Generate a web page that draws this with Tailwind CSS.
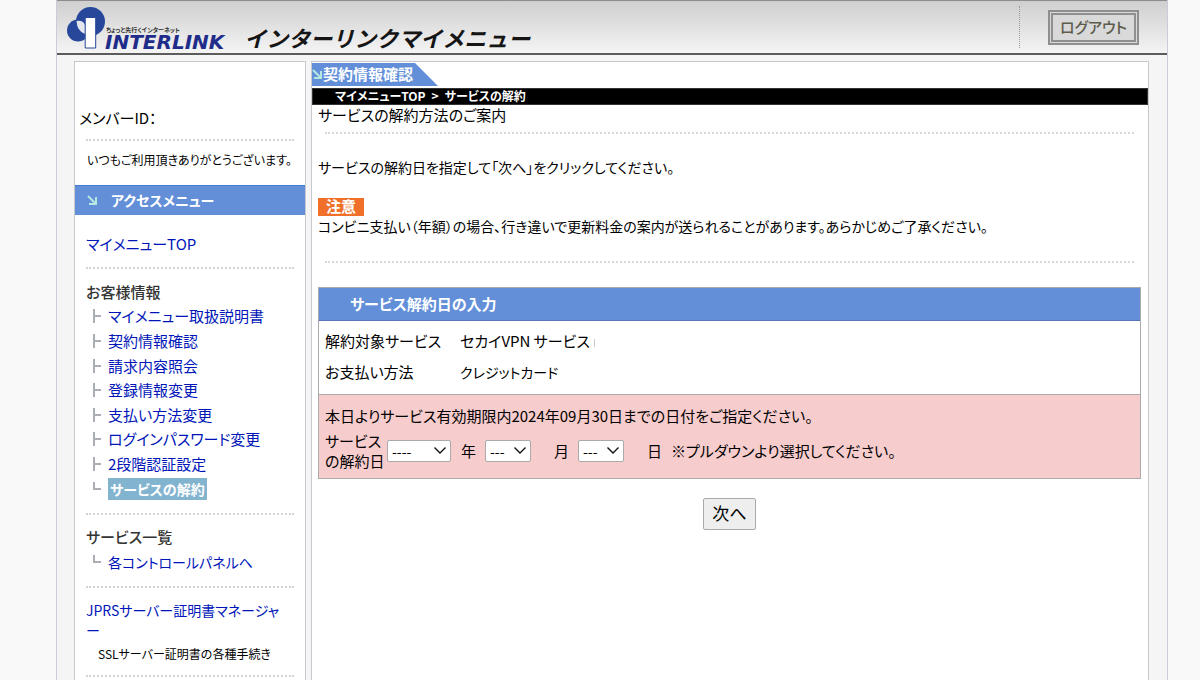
<!DOCTYPE html>
<html lang="ja">
<head>
<meta charset="utf-8">
<title>インターリンクマイメニュー</title>
<script src="https://cdn.jsdelivr.net/npm/@tailwindcss/browser@4"></script>
</head>
<body class="min-h-screen bg-[#f9f9f9] font-['Noto_Sans_CJK_JP',sans-serif] text-[15px] leading-5 text-black [font-feature-settings:'palt']">
<div class="ml-14 mr-8 flex min-h-screen flex-col border-x border-[#c9cdd6] bg-[#f5f5f5]">
  <header class="flex h-[55px] items-stretch border-t border-b-2 border-t-[#8c8c8c] border-b-[#5c5c5c] bg-linear-to-b from-[#cfcfcf] to-[#f4f4f4]">
    <a href="#" aria-label="INTERLINK" class="flex items-start pt-[5px] pl-[9px]">
      <svg class="h-[43px] w-[39px] shrink-0" viewBox="0 0 39 43">
        <circle cx="12" cy="24.500" r="11" fill="#27479b"/>
        <circle cx="24.500" cy="15.500" r="14.500" fill="#27479b"/>
        <path d="M10.500 15Q17 14 19 19V28Q11 25 10.500 15Z" fill="#e3e6ee"/>
        <path d="M19.200 11.500H29.700V42H19.200Z" fill="#fff" stroke="#27479b" stroke-width="1"/>
      </svg>
      <span class="flex flex-col pt-5 text-[#1f2c8a]">
        <span class="pl-px text-[6px] leading-2 font-bold text-[#333]">ちょっと先行くインターネット</span>
        <span class="font-['DejaVu_Sans'] text-[20px] leading-4 font-bold italic">INTERLINK</span>
      </span>
    </a>
    <h1 class="ml-5 pt-[22px] text-[22px] leading-7 font-bold whitespace-nowrap text-[#151515] italic [font-feature-settings:normal]">インターリンクマイメニュー</h1>
    <div class="my-[5px] mr-7 ml-auto border-l border-dotted border-[#999]"></div>
    <button type="button" class="mt-[9px] mr-7 h-[35px] w-[91px] border-[5px] border-double border-[#8f8f8f] bg-[#d9d9d9] pb-[2px] text-[15px] font-medium text-[#5e5c4d]">ログアウト</button>
  </header>

  <div class="flex flex-1 items-stretch gap-[5px] pt-[6px] pr-[18px] pl-[17px]">
    <aside class="w-[232px] shrink-0 border border-b-0 border-[#c8c9ce] bg-white">
      <p class="pt-[46px] pl-[4px]">メンバーID：</p>
      <hr class="mx-[11px] mt-[11px] border-t-2 border-dotted border-[#d4d4d4]">
      <p class="mt-[9px] pl-3 text-[12px] whitespace-nowrap">いつもご利用頂きありがとうございます。</p>
      <h2 class="mt-[15px] flex h-[30px] items-center border-t border-[#3f7dd6] bg-[#638fd9] pb-[2px] pl-3 text-[14px] font-bold text-white">
        <svg class="mr-[14px] h-[10px] w-[10px]" viewBox="0 0 10 10" fill="none" stroke="#b5e6e0" stroke-width="2"><path d="M1 1L8 8M9 2V9H2"/></svg>アクセスメニュー
      </h2>
      <nav>
        <p class="mt-[19px] pl-[11px]"><a href="#" class="text-[#0015b8]">マイメニューTOP</a></p>
        <hr class="mx-[11px] mt-[13px] border-t-2 border-dotted border-[#d4d4d4]">
        <h3 class="mt-[13px] pl-[11px] font-medium text-[#333]">お客様情報</h3>
        <ul class="mt-[2px] grid h-[197px] auto-rows-fr items-center pl-[17px] text-[#0015b8]">
          <li class="flex items-center gap-[7px]"><svg class="h-[14px] w-[9px]" viewBox="0 0 9 14" fill="none" stroke="#abafb5" stroke-width="2"><path d="M2 0V14M2 7H9"/></svg><a href="#">マイメニュー取扱説明書</a></li>
          <li class="flex items-center gap-[7px]"><svg class="h-[14px] w-[9px]" viewBox="0 0 9 14" fill="none" stroke="#abafb5" stroke-width="2"><path d="M2 0V14M2 7H9"/></svg><a href="#">契約情報確認</a></li>
          <li class="flex items-center gap-[7px]"><svg class="h-[14px] w-[9px]" viewBox="0 0 9 14" fill="none" stroke="#abafb5" stroke-width="2"><path d="M2 0V14M2 7H9"/></svg><a href="#">請求内容照会</a></li>
          <li class="flex items-center gap-[7px]"><svg class="h-[14px] w-[9px]" viewBox="0 0 9 14" fill="none" stroke="#abafb5" stroke-width="2"><path d="M2 0V14M2 7H9"/></svg><a href="#">登録情報変更</a></li>
          <li class="flex items-center gap-[7px]"><svg class="h-[14px] w-[9px]" viewBox="0 0 9 14" fill="none" stroke="#abafb5" stroke-width="2"><path d="M2 0V14M2 7H9"/></svg><a href="#">支払い方法変更</a></li>
          <li class="flex items-center gap-[7px]"><svg class="h-[14px] w-[9px]" viewBox="0 0 9 14" fill="none" stroke="#abafb5" stroke-width="2"><path d="M2 0V14M2 7H9"/></svg><a href="#">ログインパスワード変更</a></li>
          <li class="flex items-center gap-[7px]"><svg class="h-[14px] w-[9px]" viewBox="0 0 9 14" fill="none" stroke="#abafb5" stroke-width="2"><path d="M2 0V14M2 7H9"/></svg><a href="#">2段階認証設定</a></li>
          <li class="flex items-center gap-[7px]"><svg class="h-[14px] w-[9px]" viewBox="0 0 9 14" fill="none" stroke="#abafb5" stroke-width="2"><path d="M2 0V7H9"/></svg><a href="#" class="bg-[#82b4d0] px-[2px] py-px text-[14px] font-bold text-white">サービスの解約</a></li>
        </ul>
        <hr class="mx-[11px] mt-[12px] border-t-2 border-dotted border-[#d4d4d4]">
        <h3 class="mt-[12px] pl-[11px] font-medium text-[#333]">サービス一覧</h3>
        <p class="mt-[5px] flex items-center gap-[7px] pl-[17px] text-[14px] text-[#0015b8]"><svg class="h-[14px] w-[9px]" viewBox="0 0 9 14" fill="none" stroke="#abafb5" stroke-width="2"><path d="M2 0V7H9"/></svg><a href="#">各コントロールパネルへ</a></p>
        <hr class="mx-[11px] mt-[14px] border-t-2 border-dotted border-[#d4d4d4]">
        <p class="mt-[12px] pr-[11px] pl-[11px]"><a href="#" class="text-[14px] text-[#0015b8]">JPRSサーバー証明書マネージャ<br>ー</a></p>
        <p class="mt-1 pl-[23px] text-[12px]">SSLサーバー証明書の各種手続き</p>
        <hr class="mx-[11px] mt-[11px] border-t-2 border-dotted border-[#d4d4d4]">
      </nav>
    </aside>

    <main class="min-w-0 flex-1 border border-b-0 border-[#c8c9ce] bg-white">
      <h2 class="mt-px flex h-[23px] w-[126px] items-center bg-[#638fd9] pb-[2px] text-[15px] font-bold whitespace-nowrap text-white [clip-path:polygon(0_0,103px_0,100%_100%,0_100%)]">
        <svg class="mr-px h-[10px] w-[10px]" viewBox="0 0 10 10" fill="none" stroke="#b5e6e0" stroke-width="2"><path d="M1 1L8 8M9 2V9H2"/></svg>契約情報確認
      </h2>
      <nav class="mt-[2px] flex h-[17px] items-center gap-[6px] border border-[#333] bg-black pb-[2px] pl-[22px] text-[12px] font-bold text-white">
        <a href="#">マイメニューTOP</a><span>&gt;</span><span>サービスの解約</span>
      </nav>
      <div class="pr-[7px] pl-[6px]">
        <p>サービスの解約方法のご案内</p>
        <hr class="mx-[7px] mt-[7px] border-t-2 border-dotted border-[#d9d9d9]">
        <p class="mt-[23px] text-[14px]">サービスの解約日を指定して「次へ」をクリックしてください。</p>
        <p class="mt-[21px]"><strong class="flex h-[18px] w-[46px] items-center justify-center bg-[#f0702a] pb-[2px] font-bold text-white">注意</strong></p>
        <p class="text-[14px]">コンビニ支払い（年額）の場合、行き違いで更新料金の案内が送られることがあります。あらかじめご了承ください。</p>
        <hr class="mx-[7px] mt-[25px] border-t-2 border-dotted border-[#d9d9d9]">
        <form class="mt-6" onsubmit="return false">
          <section class="border border-[#aaa]">
            <h3 class="flex h-[33px] items-center border-b border-[#5578b5] bg-[#638fd9] pb-px pl-[31px] font-bold text-white">サービス解約日の入力</h3>
            <dl class="grid h-[74px] grid-cols-[135px_1fr] content-start gap-y-[11px] border-b border-[#aaa] px-[6px] pt-[10px]">
              <dt>解約対象サービス</dt><dd>セカイVPN サービス<span class="ml-1 inline-block h-2 w-px bg-[#ccc]"></span></dd>
              <dt>お支払い方法</dt><dd class="text-[14px]">クレジットカード</dd>
            </dl>
            <div class="h-[83px] bg-[#f7cccc] px-[6px] pt-[11px]">
              <p>本日よりサービス有効期限内2024年09月30日までの日付をご指定ください。</p>
              <div class="mt-[5px] flex items-center">
                <span class="w-[62px] leading-5">サービス<br>の解約日</span>
                <span class="relative flex w-[74px]"><select id="y" class="h-[22px] w-16 appearance-none rounded-[2px] border border-[#aaa] bg-white pl-1 text-[14px] leading-5"><option>----</option></select><svg class="pointer-events-none absolute top-[7px] left-[47px] h-[7px] w-[12px]" viewBox="0 0 12 7" fill="none" stroke="#111" stroke-width="1.400"><path d="M.5 .5L6 6L11.500 .5"/></svg></span>
                <label for="y" class="w-[24px]">年</label>
                <span class="relative flex w-[69px]"><select id="m" class="h-[22px] w-[46px] appearance-none rounded-[2px] border border-[#aaa] bg-white pl-1 text-[14px] leading-5"><option>---</option></select><svg class="pointer-events-none absolute top-[7px] left-[29px] h-[7px] w-[12px]" viewBox="0 0 12 7" fill="none" stroke="#111" stroke-width="1.400"><path d="M.5 .5L6 6L11.500 .5"/></svg></span>
                <label for="m" class="w-6">月</label>
                <span class="relative flex w-[69px]"><select id="d" class="h-[22px] w-[46px] appearance-none rounded-[2px] border border-[#aaa] bg-white pl-1 text-[14px] leading-5"><option>---</option></select><svg class="pointer-events-none absolute top-[7px] left-[29px] h-[7px] w-[12px]" viewBox="0 0 12 7" fill="none" stroke="#111" stroke-width="1.400"><path d="M.5 .5L6 6L11.500 .5"/></svg></span>
                <label for="d" class="w-6">日</label>
                <span>※プルダウンより選択してください。</span>
              </div>
            </div>
          </section>
          <button type="submit" class="mx-auto mt-[19px] block h-8 w-[53px] rounded-[2px] border border-[#aaa] bg-[#eee] pb-[2px] text-[17px]">次へ</button>
        </form>
      </div>
    </main>
  </div>
</div>
</body>
</html>
